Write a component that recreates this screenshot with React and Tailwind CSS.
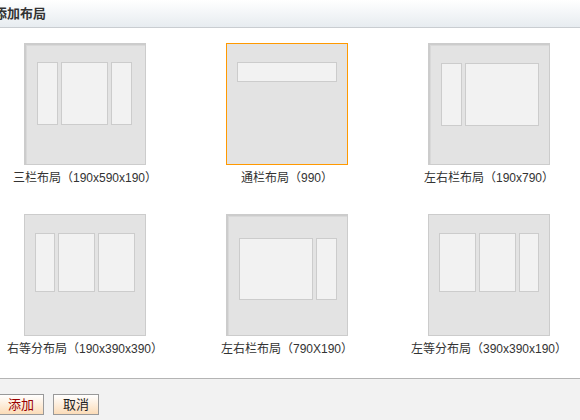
import React from "react";

const font = { fontFamily: '"Liberation Sans", "Noto Sans CJK SC", sans-serif' };

function Panel({ w, h }) {
  return (
    <div
      className="shrink-0 border border-[#cccccc] bg-[#f2f2f2] box-border"
      style={{ width: w, height: h }}
    />
  );
}

function Tile({ boxClass, padClass, panels, label }) {
  return (
    <div className="w-[202px] shrink-0 flex flex-col items-center">
      <div className={`w-[122px] h-[122px] box-border bg-[#e3e3e3] flex gap-[3px] items-start ${boxClass} ${padClass}`}>
        {panels.map((p, i) => (
          <Panel key={i} w={p[0]} h={p[1]} />
        ))}
      </div>
      <div className="mt-[5px] text-[12px] leading-[16px] text-[#333] whitespace-nowrap">{label}</div>
    </div>
  );
}

const thick = "border border-[#cccccc] border-t-2 border-l-2 shadow-[inset_1px_1px_0_#d8d8d8]";
const thin = "border border-[#cccccc]";

export default function App() {
  return (
    <div className="w-[580px] h-[420px] overflow-hidden bg-white flex flex-col" style={font}>
      <div className="h-[28px] shrink-0 bg-gradient-to-b from-white to-[#e7ecf0] border-b border-[#c9cdd1] flex items-center overflow-hidden">
        <span className="ml-[-6px] text-[13px] font-bold text-[#333] leading-none">添加布局</span>
      </div>
      <div className="h-[350px] shrink-0 pt-[15px] overflow-hidden">
        <div className="flex ml-[-16px]">
          <Tile
            boxClass={thick}
            padClass="pl-[11px] pt-[17px]"
            panels={[[21, 63], [47, 63], [21, 63]]}
            label="三栏布局（190x590x190）"
          />
          <Tile
            boxClass="border border-[#ff9900]"
            padClass="pl-[10px] pt-[18px]"
            panels={[[100, 20]]}
            label="通栏布局（990）"
          />
          <Tile
            boxClass={thick}
            padClass="pl-[11px] pt-[18px]"
            panels={[[21, 63], [74, 63]]}
            label="左右栏布局（190x790）"
          />
        </div>
        <div className="flex ml-[-16px] mt-[28px]">
          <Tile
            boxClass={thin}
            padClass="pl-[10px] pt-[18px]"
            panels={[[20, 59], [37, 59], [37, 59]]}
            label="右等分布局（190x390x390）"
          />
          <Tile
            boxClass={thick}
            padClass="pl-[11px] pt-[22px]"
            panels={[[74, 62], [21, 62]]}
            label="左右栏布局（790X190）"
          />
          <Tile
            boxClass={thin}
            padClass="pl-[10px] pt-[18px]"
            panels={[[37, 59], [37, 59], [20, 59]]}
            label="左等分布局（390x390x190）"
          />
        </div>
      </div>
      <div className="flex-1 border-t border-[#b4b4b4] bg-[#f2f2f2] pt-[15px] flex gap-[9px] pl-0">
        <button className="ml-[-2px] w-[46px] h-[21px] box-border border border-[#999] bg-gradient-to-b from-white to-[#fbdcb8] text-[13px] leading-none text-[#990000]">
          添加
        </button>
        <button className="w-[46px] h-[21px] box-border border border-[#999] bg-gradient-to-b from-white to-[#fbdcb8] text-[13px] leading-none text-[#222]">
          取消
        </button>
      </div>
    </div>
  );
}
